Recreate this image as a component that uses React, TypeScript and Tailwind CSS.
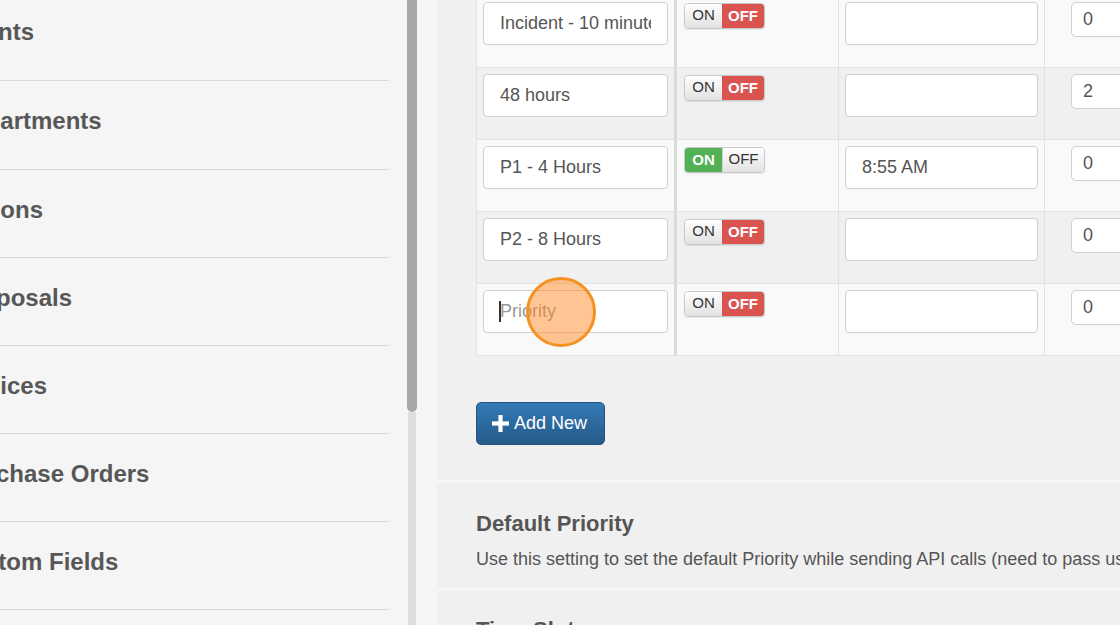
import React from "react";

interface MenuItem {
  label: string;
  shift: string;
  height: string;
}

const menu: MenuItem[] = [
  { label: "Clients", shift: "ml-[-46px]", height: "h-[89px]" },
  { label: "Departments", shift: "ml-[-45px]", height: "h-[89px]" },
  { label: "Actions", shift: "ml-[-45px]", height: "h-[88px]" },
  { label: "Proposals", shift: "ml-[-44px]", height: "h-[88px]" },
  { label: "Invoices", shift: "ml-[-49px]", height: "h-[88px]" },
  { label: "Purchase Orders", shift: "ml-[-44px]", height: "h-[88px]" },
  { label: "Custom Fields", shift: "ml-[-47px]", height: "h-[88px]" },
];

interface Row {
  name: string;
  on: boolean;
  time: string;
  count: string;
}

const rows: Row[] = [
  { name: "Incident - 10 minutes", on: false, time: "", count: "0" },
  { name: "48 hours", on: false, time: "", count: "2" },
  { name: "P1 - 4 Hours", on: true, time: "8:55 AM", count: "0" },
  { name: "P2 - 8 Hours", on: false, time: "", count: "0" },
  { name: "", on: false, time: "", count: "0" },
];

function Toggle({ on }: { on: boolean }) {
  return (
    <div className="flex h-[26px] w-[81px] overflow-hidden rounded-[4px] border border-[#c8c8c8] text-[15px] leading-none shadow-[0_1px_1px_rgba(0,0,0,0.08)]">
      {on ? (
        <div className="flex w-[37px] items-center justify-center bg-[#52b152] pb-[2px] font-bold text-white">
          ON
        </div>
      ) : (
        <div className="flex w-[37px] items-center justify-center bg-gradient-to-b from-white to-[#e2e2e2] pb-[3px] text-[#333]">
          ON
        </div>
      )}
      {on ? (
        <div className="flex flex-1 items-center justify-center border-l border-[#d0d0d0] bg-gradient-to-b from-white to-[#e2e2e2] pb-[3px] text-[#333]">
          OFF
        </div>
      ) : (
        <div className="flex flex-1 items-center justify-center bg-[#d9534f] pb-[2px] font-bold text-white">
          OFF
        </div>
      )}
    </div>
  );
}

function TextBox({ value, className }: { value: string; className: string }) {
  return (
    <input
      readOnly
      value={value}
      className={`block rounded-[4px] border border-[#cfcfcf] bg-white text-[18px] text-[#555] outline-none ${className}`}
    />
  );
}

export default function App() {
  return (
    <div className="flex h-[625px] w-[1120px] overflow-hidden bg-[#f5f5f5] font-['Liberation_Sans',Arial,sans-serif]">
      {/* sidebar */}
      <aside className="w-[407px] shrink-0 overflow-hidden">
        <ul className="mt-[-8px] w-[389px]">
          {menu.map((item) => (
            <li
              key={item.label}
              className={`${item.height} border-b border-[#dadada] pt-[26px]`}
            >
              <span
                className={`${item.shift} block whitespace-nowrap text-[24px] font-bold leading-[27px] text-[#575757]`}
              >
                {item.label}
              </span>
            </li>
          ))}
        </ul>
      </aside>

      {/* scrollbar */}
      <div className="flex w-[10px] shrink-0 flex-col">
        <div className="h-[412px] rounded-b-[5px] bg-[#a8a8a8]" />
        <div className="ml-[1px] w-[8px] flex-1 bg-[#dedede]" />
      </div>

      <div className="w-[20px] shrink-0" />

      {/* main */}
      <main className="flex min-w-0 flex-1 flex-col gap-[3px] overflow-hidden bg-[#f7f7f7]">
        <section className="h-[480px] shrink-0 bg-[#f1f0f0] pl-[39px]">
          <div className="mt-[-4px] w-[800px] border-l border-[#e2e2e2]">
            {rows.map((row, i) => (
              <div
                key={i}
                className={`flex h-[72px] border-b border-[#e2e2e2] ${
                  i % 2 === 0 ? "bg-[#f9f9f9]" : "bg-[#f1f0f0]"
                }`}
              >
                <div className="w-[200px] shrink-0 border-r-[3px] border-[#dadada] px-[6px] pt-[6px]">
                  {row.name ? (
                    <TextBox
                      value={row.name}
                      className="h-[43px] w-full px-[16px]"
                    />
                  ) : (
                    <div className="relative">
                      <input
                        readOnly
                        placeholder="Priority"
                        className="block h-[43px] w-full rounded-[4px] border border-[#cfcfcf] bg-white pl-[16px] text-[18px] text-[#555] outline-none placeholder:text-[#999]"
                      />
                      <span className="absolute left-[16px] top-[11px] h-[21px] w-[2px] bg-[#333]" />
                    </div>
                  )}
                </div>
                <div className="w-[162px] shrink-0 border-r border-[#e2e2e2] pl-[7px] pt-[7px]">
                  <Toggle on={row.on} />
                </div>
                <div className="w-[206px] shrink-0 border-r border-[#e2e2e2] px-[6px] pt-[6px]">
                  <TextBox value={row.time} className="h-[43px] w-full pl-[16px]" />
                </div>
                <div className="flex-1 pl-[26px] pt-[6px]">
                  <TextBox
                    value={row.count}
                    className="h-[35px] w-[120px] rounded-[5px] pl-[11px]"
                  />
                </div>
              </div>
            ))}
          </div>

          <button className="mt-[46px] flex h-[43px] items-center gap-[5px] rounded-[5px] border border-[#245580] bg-gradient-to-b from-[#337ab7] to-[#265a88] pl-[15px] pr-[17px] text-[18px] text-white">
            <svg width="17" height="17" viewBox="0 0 17 17" fill="#fff">
              <rect x="6.4" y="0" width="4.2" height="17" />
              <rect x="0" y="6.4" width="17" height="4.2" />
            </svg>
            <span>Add New</span>
          </button>
        </section>

        <section className="h-[105px] shrink-0 bg-[#f1f0f0] pl-[39px] pt-[28px] text-[#555]">
          <h2 className="text-[22px] font-bold leading-[26px]">Default Priority</h2>
          <p className="mt-[10px] whitespace-nowrap text-[18px] leading-[24px]">
            Use this setting to set the default Priority while sending API calls (need to pass us the priority name)
          </p>
        </section>

        <section className="flex-1 bg-[#f1f0f0] pl-[39px] pt-[26px] text-[#555]">
          <h2 className="text-[22px] font-bold leading-[26px]">Time Slots</h2>
        </section>
      </main>

      {/* click highlight */}
      <div className="pointer-events-none absolute left-[526px] top-[277px] h-[70px] w-[70px] rounded-full border-[3px] border-[#f5911e] bg-[rgba(255,135,30,0.48)]" />
    </div>
  );
}
